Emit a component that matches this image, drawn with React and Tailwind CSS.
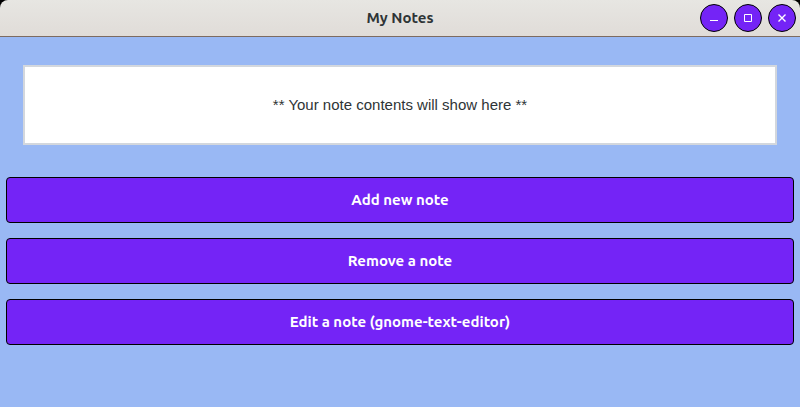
const windowControls = [
  { label: 'Minimize', icon: <path d="M4 10.5h8" /> },
  { label: 'Maximize', icon: <path d="M4.5 4.5h7v7h-7z" /> },
  { label: 'Close', icon: <path d="M4.5 4.5l7 7M11.5 4.5l-7 7" strokeWidth="1.4" /> },
];

const actions = ['Add new note', 'Remove a note', 'Edit a note (gnome-text-editor)'];

function TitleBar() {
  return (
    <header className="grid h-[37px] grid-cols-[1fr_auto_1fr] items-center rounded-t-lg border-b border-[#7d6b61] bg-linear-to-b from-[#e7e6e2] to-[#e0dcd8] px-1">
      <h1 className="col-start-2 text-[15px] font-bold text-[#2e3436]">My Notes</h1>
      <div className="flex justify-end gap-1.5">
        {windowControls.map(({ label, icon }) => (
          <button
            key={label}
            type="button"
            aria-label={label}
            className="flex size-7 items-center justify-center rounded-full border border-black bg-[#7424f6] text-white"
          >
            <svg viewBox="0 0 16 16" className="size-4" fill="none" stroke="currentColor" strokeWidth="1">
              {icon}
            </svg>
          </button>
        ))}
      </div>
    </header>
  );
}

export default function App() {
  return (
    <div className="flex min-h-screen flex-col bg-black font-['Ubuntu','Noto_Sans',sans-serif]">
      <TitleBar />
      <main className="flex-1 bg-[#99b8f4] px-1.5 pt-7">
        <section className="mx-[17px] flex h-20 items-center justify-center border-2 border-[#d3d7dd] bg-white">
          <p className="font-['Liberation_Sans',Arial,sans-serif] text-[15px] text-[#2e3436]">
            ** Your note contents will show here **
          </p>
        </section>
        <div className="mt-8 flex flex-col gap-[15px]">
          {actions.map((action) => (
            <button
              key={action}
              type="button"
              className="h-[46px] rounded-sm border border-black bg-[#7424f6] text-[15px] font-bold text-white"
            >
              {action}
            </button>
          ))}
        </div>
      </main>
    </div>
  );
}
